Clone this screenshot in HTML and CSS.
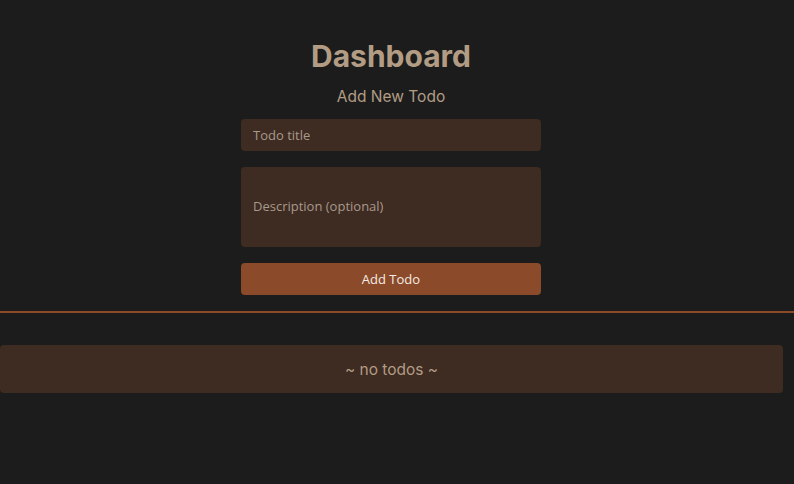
FILE: index.html
```html
<!DOCTYPE html>
<html lang="en">
<head>
<meta charset="utf-8">
<title>Dashboard</title>
<link rel="stylesheet" href="styles.css">
</head>
<body>
<main class="page">
  <header class="top">
    <h1 class="title">Dashboard</h1>
    <h2 class="subtitle">Add New Todo</h2>
    <form class="form">
      <input class="field" type="text" placeholder="Todo title">
      <textarea class="field area" placeholder="Description (optional)"></textarea>
      <button class="btn" type="button">Add Todo</button>
    </form>
  </header>
  <div class="rule"></div>
  <section class="list">
    <div class="empty">~ no todos ~</div>
  </section>
</main>
</body>
</html>
```
FILE: styles.css
```css
html, body {
  margin: 0;
  padding: 0;
  background: #1c1c1c;
}
body {
  font-family: Inter, "Liberation Sans", sans-serif;
  color: #b29c84;
}
.page {
  display: flex;
  flex-direction: column;
}
.top {
  display: flex;
  flex-direction: column;
  align-items: center;
  padding: 37px 12px 0 0;
}
.title {
  margin: 0;
  font-size: 30px;
  line-height: 38px;
  font-weight: 700;
  color: #b29c84;
}
.subtitle {
  margin: 11px 0 0;
  font-size: 15.5px;
  line-height: 22px;
  font-weight: 400;
  color: #b29c84;
}
.form {
  margin-top: 11px;
  width: 300px;
  display: flex;
  flex-direction: column;
  gap: 16px;
}
.field {
  box-sizing: border-box;
  height: 32px;
  border: none;
  border-radius: 4px;
  background: #3e2b22;
  padding: 0 12px;
  font-family: "Open Sans", "Noto Sans", sans-serif;
  font-size: 13px;
  color: #d8c8b8;
  outline: none;
}
.field::placeholder {
  color: #a8998c;
}
.area {
  height: 80px;
  resize: none;
  padding-top: 30px;
  line-height: 18px;
}
.btn {
  height: 32px;
  border: none;
  border-radius: 4px;
  background: #8b4a29;
  color: #f4ece4;
  font-family: "Open Sans", "Noto Sans", sans-serif;
  font-size: 13px;
}
.rule {
  margin-top: 16px;
  height: 2px;
  background: #8b4a29;
}
.list {
  padding: 32px 11px 0 0;
}
.empty {
  height: 48px;
  border-radius: 4px;
  background: #3e2b22;
  display: flex;
  align-items: center;
  justify-content: center;
  font-size: 15.5px;
  color: #b29c84;
}
```
